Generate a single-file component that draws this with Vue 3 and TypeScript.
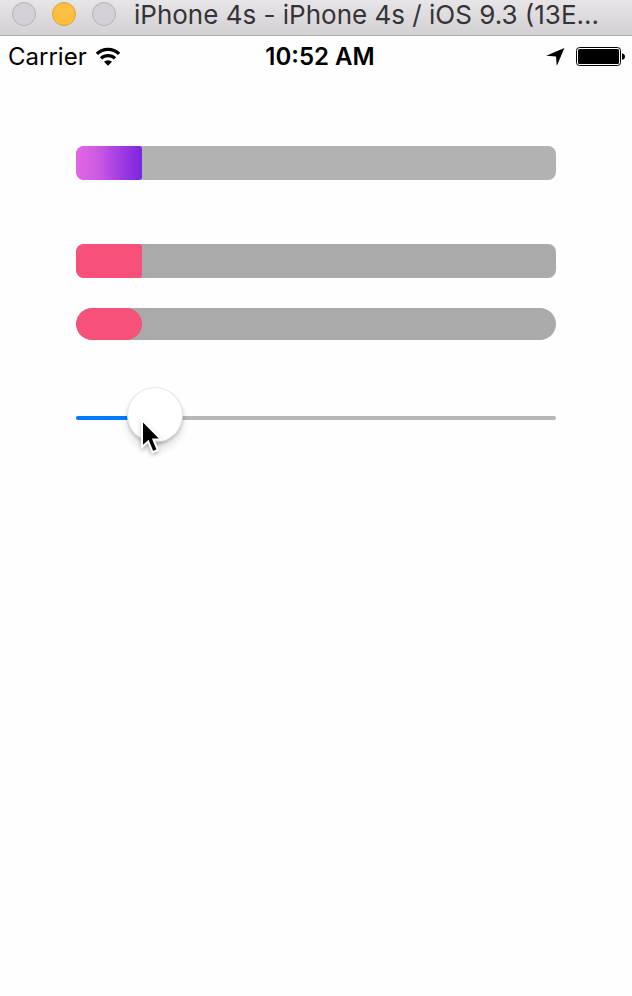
<script setup lang="ts">
import { computed, ref } from 'vue'

const value = ref(13.75)
const fill = computed(() => ({ width: `${value.value}%` }))

const bars = [
  { id: 'gradient', label: 'Gradient progress' },
  { id: 'solid', label: 'Solid progress' },
  { id: 'round', label: 'Rounded progress' },
]
</script>

<template>
  <div class="simulator">
    <header class="titlebar">
      <div class="lights">
        <button class="light" type="button" aria-label="Close"></button>
        <button class="light minimize" type="button" aria-label="Minimize"></button>
        <button class="light" type="button" aria-label="Zoom"></button>
      </div>
      <h1 class="title">iPhone 4s - iPhone 4s / iOS 9.3 (13E...</h1>
    </header>

    <div class="status">
      <div class="carrier">
        <span>Carrier</span>
        <svg class="wifi" width="26" height="20" viewBox="0 0 26 20" aria-hidden="true">
          <path d="M1.9 6.9a16 16 0 0 1 22.2 0" fill="none" stroke="#000" stroke-width="3.4" />
          <path d="M6 11.4a10.2 10.2 0 0 1 14 0" fill="none" stroke="#000" stroke-width="3.2" />
          <path d="M9 14.8a5.8 5.8 0 0 1 8 0L13 18.8z" fill="#000" />
        </svg>
      </div>
      <time class="clock">10:52 AM</time>
      <div class="indicators">
        <svg width="20" height="20" viewBox="0 0 20 20" aria-hidden="true">
          <path d="M18.4 1L10.8 19L10 9.6L0.2 8.8z" fill="#000" />
        </svg>
        <svg width="50" height="20" viewBox="0 0 50 20" aria-hidden="true">
          <rect x="0.5" y="0.5" width="44" height="18" rx="3" fill="#fff" stroke="#000" />
          <rect x="2" y="2" width="41" height="15" rx="1.5" fill="#000" />
          <path d="M46 6.2c4 .6 4 6 0 6.6z" fill="#000" />
        </svg>
      </div>
    </div>

    <main class="content">
      <div
        v-for="bar in bars"
        :key="bar.id"
        class="bar"
        :class="bar.id"
        role="progressbar"
        :aria-label="bar.label"
        aria-valuemin="0"
        aria-valuemax="100"
        :aria-valuenow="value"
      >
        <div class="fill" :style="fill"></div>
      </div>

      <div class="slider">
        <div class="track"><div class="track-fill" :style="fill"></div></div>
        <input
          v-model.number="value"
          class="range"
          type="range"
          min="0"
          max="100"
          step="0.25"
          aria-label="Progress value"
        />
        <svg class="pointer" width="24" height="38" viewBox="0 0 24 38" aria-hidden="true">
          <path
            d="M2 2V29L8.2 23.4L12.6 34.2L17.8 32L13.4 21.4H21z"
            fill="#000"
            stroke="#fff"
            stroke-width="2"
          />
        </svg>
      </div>
    </main>
  </div>
</template>

<style>
body {
  margin: 0;
  background: #fefefe;
}
</style>

<style scoped>
.simulator {
  min-height: 100vh;
  background: #fefefe;
  color: #000;
  font-family: Inter, 'Liberation Sans', sans-serif;
}

.titlebar {
  display: flex;
  align-items: flex-start;
  gap: 18px;
  box-sizing: border-box;
  height: 36px;
  padding: 0 12px;
  overflow: hidden;
  border-bottom: 1px solid #b0aeb0;
  background: linear-gradient(#e8e5e8, #d2d0d2);
}

.lights {
  display: flex;
  gap: 16px;
  padding-top: 2px;
}

.light {
  box-sizing: border-box;
  width: 24px;
  height: 24px;
  padding: 0;
  border: 1px solid #b4b2b5;
  border-radius: 50%;
  background: #d3d1d5;
}

.minimize {
  border-color: #dda03b;
  background: #fdbf41;
}

.title {
  margin: 0;
  color: #353337;
  font-size: 26px;
  font-weight: 400;
  line-height: 30px;
  white-space: nowrap;
}

.status {
  display: grid;
  grid-template-columns: 1fr auto 1fr;
  align-items: center;
  height: 42px;
  padding: 0 6px 0 8px;
  font-size: 24px;
  line-height: 42px;
}

.carrier {
  display: flex;
  align-items: center;
  gap: 8px;
}

.clock {
  padding-left: 6px;
  font-weight: 600;
}

.indicators {
  display: flex;
  align-items: center;
  justify-content: flex-end;
  gap: 10px;
}

.content {
  display: flex;
  flex-direction: column;
  padding: 68px 76px;
}

.bar {
  height: 34px;
  overflow: hidden;
  border-radius: 8px;
  background: #aaa;
}

.fill {
  height: 100%;
  border-radius: 0 3px 3px 0;
  background: #f7507a;
}

.gradient {
  margin-bottom: 64px;
  background: #b2b2b2;
}

.gradient .fill {
  background: linear-gradient(90deg, #e066e4, #d15ce2 30%, #a841e1 62%, #7a26df);
}

.solid {
  margin-bottom: 30px;
}

.round {
  height: 32px;
  border-radius: 16px;
}

.round .fill {
  border-radius: 16px;
}

.slider {
  position: relative;
  display: grid;
  align-items: center;
  margin-top: 47px;
}

.track {
  grid-area: 1 / 1;
  height: 4px;
  margin-top: 6px;
  overflow: hidden;
  border-radius: 2px;
  background: #b7b7b7;
}

.track-fill {
  height: 100%;
  background: #007aff;
}

.range {
  grid-area: 1 / 1;
  z-index: 1;
  height: 56px;
  margin: 0 -10px;
  appearance: none;
  background: transparent;
}

.range::-webkit-slider-thumb {
  box-sizing: border-box;
  width: 56px;
  height: 56px;
  appearance: none;
  border: 1px solid #e6e6e6;
  border-bottom-color: #d4d4d4;
  border-radius: 50%;
  background: #fff;
  box-shadow: 0 7px 7px 1px rgba(0, 0, 0, 0.09), 0 2px 3px rgba(0, 0, 0, 0.18);
}

.pointer {
  position: absolute;
  z-index: 2;
  top: 31px;
  left: 64px;
  pointer-events: none;
  filter: drop-shadow(0 2px 2px rgba(0, 0, 0, 0.25));
}
</style>
